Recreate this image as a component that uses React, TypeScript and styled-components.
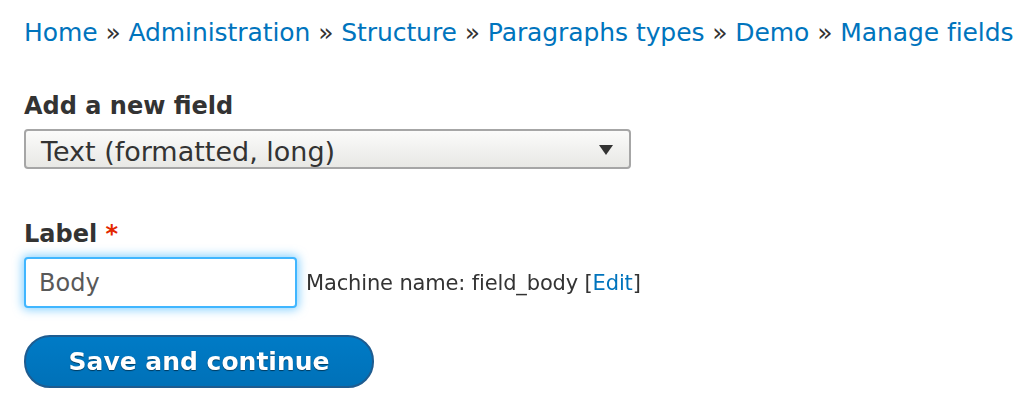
import React, { useState } from "react"
import styled, { createGlobalStyle } from "styled-components"

const GlobalStyle = createGlobalStyle`
  html, body {
    margin: 0;
    padding: 0;
    background: #ffffff;
  }
  body {
    font-family: "DejaVu Sans", "Liberation Sans", sans-serif;
    color: #333333;
  }
`

const crumbs = [
  "Home",
  "Administration",
  "Structure",
  "Paragraphs types",
  "Demo",
  "Manage fields",
]

const App = () => {
  const [label, setLabel] = useState("Body")

  return (
    <>
      <GlobalStyle />
      <Page>
        <Breadcrumb>
          {crumbs.map((c, i) => (
            <React.Fragment key={c}>
              {i > 0 && <Sep> » </Sep>}
              <Crumb href="#">{c}</Crumb>
            </React.Fragment>
          ))}
        </Breadcrumb>

        <FormItem>
          <FieldLabel>Add a new field</FieldLabel>
          <SelectBox>
            <span>Text (formatted, long)</span>
            <Arrow />
          </SelectBox>
        </FormItem>

        <FormItem $space={50}>
          <FieldLabel>
            Label <Required>*</Required>
          </FieldLabel>
          <InputRow>
            <TextInput
              autoFocus
              value={label}
              onChange={e => setLabel(e.target.value)}
            />
            <Suffix>
              Machine name: field_body [<EditLink href="#">Edit</EditLink>]
            </Suffix>
          </InputRow>
        </FormItem>

        <Button>Save and continue</Button>
      </Page>
    </>
  )
}

const Page = styled.div`
  padding: 15px 24px 0;
  display: grid;
  justify-items: start;
`

const Breadcrumb = styled.nav`
  font-size: 25px;
  line-height: 36px;
  letter-spacing: -0.08px;
  white-space: nowrap;
`

const Crumb = styled.a`
  color: #0074bd;
  text-decoration: none;
`

const Sep = styled.span`
  color: #333333;
`

const FormItem = styled.div<{ $space?: number }>`
  display: grid;
  gap: 8px;
  margin-top: ${p => p.$space ?? 40}px;
`

const FieldLabel = styled.label`
  font-weight: bold;
  font-size: 24px;
  line-height: 30px;
  color: #333333;
`

const Required = styled.span`
  color: #e32700;
`

const SelectBox = styled.div`
  box-sizing: border-box;
  width: 607px;
  height: 40px;
  display: flex;
  align-items: center;
  justify-content: space-between;
  padding: 5px 16px 0 15px;
  border: 2px solid #a6a6a6;
  border-radius: 4px;
  background: linear-gradient(#fbfbfa, #e8e8e5);
  font-size: 27px;
  color: #333333;
  span {
    line-height: 32px;
  }
`

const Arrow = styled.span`
  width: 0;
  height: 0;
  margin-top: -4px;
  border-left: 7px solid transparent;
  border-right: 7px solid transparent;
  border-top: 10px solid #333333;
`

const InputRow = styled.div`
  display: flex;
  align-items: center;
  gap: 9px;
`

const TextInput = styled.input`
  box-sizing: border-box;
  width: 273px;
  height: 51px;
  padding: 0 13px;
  border: 2px solid #40b6ff;
  border-radius: 4px;
  box-shadow: 0 0 10px 2px rgba(64, 182, 255, 0.6);
  outline: none;
  caret-color: #333333;
  font-family: "DejaVu Sans", "Liberation Sans", sans-serif;
  font-size: 24px;
  color: #595959;
`

const Suffix = styled.span`
  font-size: 21px;
  letter-spacing: -0.15px;
  color: #333333;
`

const EditLink = styled.a`
  color: #0074bd;
  text-decoration: none;
`

const Button = styled.button`
  margin-top: 27px;
  width: 350px;
  height: 53px;
  border: 2px solid #1e5c90;
  border-radius: 26px;
  background: linear-gradient(#007bc6, #0071b8);
  color: #ffffff;
  font-family: "DejaVu Sans", "Liberation Sans", sans-serif;
  font-weight: bold;
  font-size: 25px;
  text-shadow: 0 1px 1px rgba(0, 0, 0, 0.5);
  cursor: pointer;
`

export default App
